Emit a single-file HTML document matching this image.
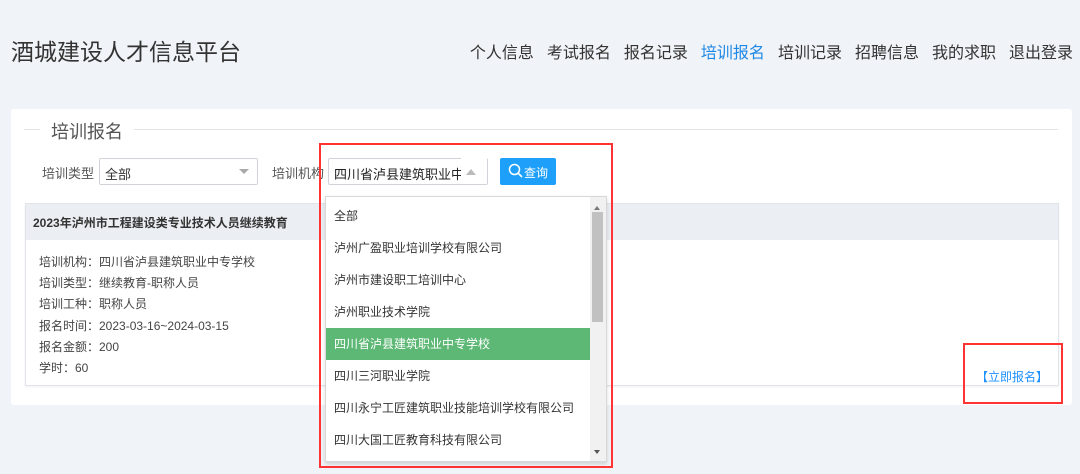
<!DOCTYPE html>
<html><head><meta charset="utf-8"><style>
*{margin:0;padding:0;box-sizing:border-box}
body{width:1080px;height:474px;background:#f0f3f7;font-family:"Liberation Sans","Noto Sans CJK SC",sans-serif;position:relative;overflow:hidden;color:#333}
.a{position:absolute;white-space:nowrap}
.nav span{margin-left:13px}
</style></head><body>
<div class="a" style="left:11px;top:33px;font-size:23px;color:#333">酒城建设人才信息平台</div>
<div class="a nav" style="right:7px;top:39px;font-size:16px;color:#333"><span>个人信息</span><span>考试报名</span><span>报名记录</span><span style="color:#1e88e5">培训报名</span><span>培训记录</span><span>招聘信息</span><span>我的求职</span><span>退出登录</span></div>

<div class="a" style="left:11px;top:109px;width:1061px;height:296px;background:#fff;border-radius:3px"></div>
<div class="a" style="left:24px;top:129px;width:1034px;height:1px;background:#e2e4e8"></div>
<div class="a" style="left:40px;top:118px;padding:0 11px;background:#fff;font-size:18px;color:#555">培训报名</div>

<div class="a" style="left:42px;top:163px;font-size:13px;color:#555">培训类型</div>
<div class="a" style="left:99px;top:158px;width:159px;height:27px;border:1px solid #d0d4d9;border-radius:2px;font-size:13px;padding:5px 5px;color:#333">全部</div>
<div class="a" style="left:239px;top:169px;border:5px solid transparent;border-top:5px solid #aaa"></div>
<div class="a" style="left:272px;top:163px;font-size:13px;color:#555">培训机构</div>
<div class="a" style="left:328px;top:158px;width:160px;height:27px;border:1px solid #d0d4d9;border-radius:2px;font-size:13px;padding:5px 5px;color:#222;overflow:hidden">四川省泸县建筑职业中专</div>
<div class="a" style="left:461px;top:158px;width:26px;height:25px;background:#fff"></div>
<div class="a" style="left:466px;top:164px;border:5px solid transparent;border-bottom:6px solid #bbb"></div>
<div class="a" style="left:500px;top:158px;width:56px;height:27px;background:#1ea0fa;border-radius:2px;color:#fff;font-size:12px;padding:6px 0 0 24px">查询</div>
<svg class="a" style="left:508px;top:163px" width="16" height="17"><circle cx="6.5" cy="6.5" r="5" fill="none" stroke="#fff" stroke-width="1.5"/><line x1="10" y1="10" x2="14" y2="14" stroke="#fff" stroke-width="1.6"/></svg>

<div class="a" style="left:25px;top:203px;width:1034px;height:183px;border:1px solid #e1e4e8;box-shadow:0 1px 2px rgba(0,0,0,.06)"></div>
<div class="a" style="left:26px;top:204px;width:1032px;height:36px;background:#ebeff3"></div>
<div class="a" style="left:33px;top:214px;font-size:12px;font-weight:bold;color:#333">2023年泸州市工程建设类专业技术人员继续教育</div>
<div class="a" style="left:39px;top:252px;font-size:12px;line-height:21.2px;color:#444">培训机构：四川省泸县建筑职业中专学校<br>培训类型：继续教育-职称人员<br>培训工种：职称人员<br>报名时间：2023-03-16~2024-03-15<br>报名金额：200<br>学时：60</div>
<div class="a" style="left:976px;top:368px;font-size:12px;color:#1e90ff">【立即报名】</div>

<div class="a" style="left:325px;top:196px;width:282px;height:266px;background:#fff;border:1px solid #d8d8d8;box-shadow:0 2px 4px rgba(0,0,0,.15)"></div>
<div class="a" style="left:326px;top:200px;font-size:12px;line-height:32px;color:#333">
<div style="padding-left:8px">全部</div>
<div style="padding-left:8px">泸州广盈职业培训学校有限公司</div>
<div style="padding-left:8px">泸州市建设职工培训中心</div>
<div style="padding-left:8px">泸州职业技术学院</div>
<div style="padding-left:8px;width:264px;background:#5cb874;color:#fff">四川省泸县建筑职业中专学校</div>
<div style="padding-left:8px">四川三河职业学院</div>
<div style="padding-left:8px">四川永宁工匠建筑职业技能培训学校有限公司</div>
<div style="padding-left:8px">四川大国工匠教育科技有限公司</div>
</div>
<div class="a" style="left:590px;top:197px;width:16px;height:264px;background:#f1f1f1"></div>
<div class="a" style="left:592px;top:212px;width:11px;height:110px;background:#c1c1c1"></div>
<div class="a" style="left:594px;top:203px;border:3px solid transparent;border-bottom:4px solid #777"></div>
<div class="a" style="left:594px;top:450px;border:3px solid transparent;border-top:4px solid #555"></div>

<div class="a" style="left:319px;top:143px;width:294px;height:325px;border:2px solid #f33"></div>
<div class="a" style="left:963px;top:343px;width:100px;height:61px;border:2px solid #f33"></div>
</body></html>
